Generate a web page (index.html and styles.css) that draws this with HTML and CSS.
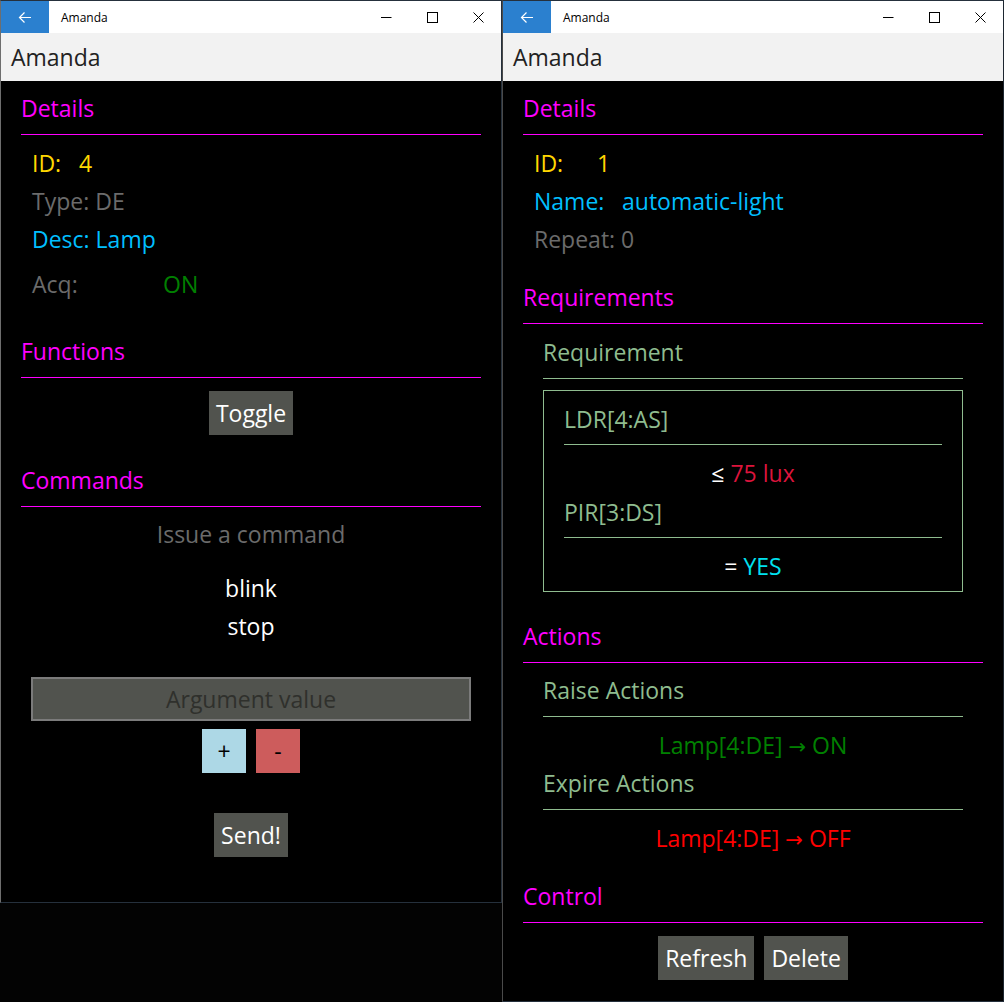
FILE: index.html
```html
<!DOCTYPE html>
<html>
<head>
<meta charset="utf-8">
<title>Amanda</title>
<link rel="stylesheet" href="styles.css">
</head>
<body>
<div class="desk">
  <div class="win win-left">
    <div class="titlebar">
      <div class="back"><svg width="14" height="13" viewBox="0 0 14 13"><path d="M13 6.5H1.5M6.5 1.5L1.5 6.5L6.5 11.5" fill="none" stroke="#fff" stroke-width="1.2"/></svg></div>
      <div class="wtitle">Amanda</div>
      <div class="caps">
        <div class="cap"><svg width="11" height="11" viewBox="0 0 11 11"><path d="M0 5.5H10.5" stroke="#000" stroke-width="1"/></svg></div>
        <div class="cap"><svg width="11" height="11" viewBox="0 0 11 11"><rect x="0.5" y="0.5" width="10" height="10" fill="none" stroke="#000" stroke-width="1"/></svg></div>
        <div class="cap"><svg width="11" height="11" viewBox="0 0 11 11"><path d="M0.5 0.5L10.5 10.5M10.5 0.5L0.5 10.5" stroke="#000" stroke-width="1"/></svg></div>
      </div>
    </div>
    <div class="appbar">Amanda</div>
    <div class="content">
      <h2 class="head h-details">Details</h2>
      <div class="rows">
        <div class="row gold"><span class="lbl w-id">ID:</span><span>4</span></div>
        <div class="row gray">Type: DE</div>
        <div class="row sky">Desc: Lamp</div>
        <div class="row gray acq"><span class="lbl w-acq">Acq:</span><span class="green">ON</span></div>
      </div>
      <h2 class="head h-functions">Functions</h2>
      <div class="center btnrow toggle-row"><button class="btn">Toggle</button></div>
      <h2 class="head h-commands">Commands</h2>
      <div class="center gray line38 issue">Issue a command</div>
      <div class="cmds center">
        <div class="line38">blink</div>
        <div class="line38">stop</div>
      </div>
      <div class="argbox">Argument value</div>
      <div class="center btnrow pm-row">
        <button class="sq plus">+</button>
        <button class="sq minus">-</button>
      </div>
      <div class="center btnrow send-row"><button class="btn">Send!</button></div>
    </div>
  </div>

  <div class="win win-right">
    <div class="titlebar">
      <div class="back"><svg width="14" height="13" viewBox="0 0 14 13"><path d="M13 6.5H1.5M6.5 1.5L1.5 6.5L6.5 11.5" fill="none" stroke="#fff" stroke-width="1.2"/></svg></div>
      <div class="wtitle">Amanda</div>
      <div class="caps">
        <div class="cap"><svg width="11" height="11" viewBox="0 0 11 11"><path d="M0 5.5H10.5" stroke="#000" stroke-width="1"/></svg></div>
        <div class="cap"><svg width="11" height="11" viewBox="0 0 11 11"><rect x="0.5" y="0.5" width="10" height="10" fill="none" stroke="#000" stroke-width="1"/></svg></div>
        <div class="cap"><svg width="11" height="11" viewBox="0 0 11 11"><path d="M0.5 0.5L10.5 10.5M10.5 0.5L0.5 10.5" stroke="#000" stroke-width="1"/></svg></div>
      </div>
    </div>
    <div class="appbar">Amanda</div>
    <div class="content">
      <h2 class="head h-details">Details</h2>
      <div class="rows">
        <div class="row gold"><span class="lbl w-id2">ID:</span><span>1</span></div>
        <div class="row sky"><span class="lbl w-name">Name:</span><span>automatic-light</span></div>
        <div class="row gray">Repeat: 0</div>
      </div>
      <h2 class="head h-req">Requirements</h2>
      <div class="sub">
        <h3 class="subhead sh-req">Requirement</h3>
        <div class="reqbox">
          <div class="cond-head">LDR[4:AS]</div>
          <div class="center line38 cond-val"><span class="white">≤</span> <span class="crimson">75 lux</span></div>
          <div class="cond-head pir">PIR[3:DS]</div>
          <div class="center line38 cond-val"><span class="white">=</span> <span class="cyan">YES</span></div>
        </div>
      </div>
      <h2 class="head h-actions">Actions</h2>
      <div class="sub">
        <h3 class="subhead sh-raise">Raise Actions</h3>
        <div class="center line38 act green">Lamp[4:DE] <span class="arr">→</span> ON</div>
        <h3 class="subhead sh-expire">Expire Actions</h3>
        <div class="center line38 act red">Lamp[4:DE] <span class="arr">→</span> OFF</div>
      </div>
      <h2 class="head h-control">Control</h2>
      <div class="center btnrow ctrl-row">
        <button class="btn">Refresh</button>
        <button class="btn">Delete</button>
      </div>
    </div>
  </div>
</div>
</body>
</html>
```
FILE: styles.css
```css
* { box-sizing: border-box; }
html, body { margin: 0; padding: 0; background: #000; }
body {
  font-family: "Open Sans", "Noto Sans", sans-serif;
  font-size: 23px;
  color: #fff;
}
.desk {
  display: flex;
  align-items: flex-start;
  width: 1004px;
  height: 1002px;
  background: #030303;
}
.win {
  width: 502px;
  background: #000;
  border: 1px solid #25303c;
  display: flex;
  flex-direction: column;
}
.win-left { height: 903px; border-left-color: #6e6e6e; }
.win-right { height: 1002px; border-left-color: #4a4a4a; border-right-color: #1d2630; }

.titlebar {
  height: 32px;
  background: #fff;
  display: flex;
  align-items: center;
}
.back {
  width: 48px;
  height: 32px;
  background: #2b80cf;
  display: flex;
  align-items: center;
  justify-content: center;
}
.wtitle {
  font-size: 12px;
  color: #000;
  margin-left: 12px;
  flex: 1;
}
.caps { display: flex; height: 32px; }
.cap {
  width: 46px;
  height: 32px;
  display: flex;
  align-items: center;
  justify-content: center;
}
.appbar {
  height: 48px;
  line-height: 48px;
  background: #f2f2f2;
  color: #222;
  padding-left: 10px;
}
.content {
  padding: 0 20px;
  flex: 1;
}
.head {
  margin: 0;
  font-size: 23px;
  font-weight: normal;
  line-height: 32px;
  color: #ff00ff;
  padding-bottom: 10px;
  border-bottom: 1px solid #ff00ff;
}
.h-details { margin-top: 11px; }
.rows { padding-left: 11px; margin-top: 9px; }
.row { line-height: 38px; height: 38px; white-space: nowrap; }
.row.acq { margin-top: 7px; }
.lbl { display: inline-block; }
.w-id { width: 47px; }
.w-acq { width: 131px; }
.w-id2 { width: 63px; }
.w-name { width: 88px; }

.gold { color: #ffd700; }
.gray { color: #6b6b6b; }
.sky { color: #00bfff; }
.green { color: #008000; }
.red { color: #ff0000; }
.white { color: #fff; }
.crimson { color: #dc143c; }
.cyan { color: #00e1ef; }
.arr { font-family: "DejaVu Sans", sans-serif; font-size: 21px; line-height: 0; }

.center { text-align: center; }
.line38 { line-height: 38px; height: 38px; }
.btnrow { display: flex; justify-content: center; gap: 10px; }
.btn {
  font-family: inherit;
  font-size: 23px;
  height: 44px;
  padding: 0 7px;
  background: #51534e;
  color: #fff;
  border: none;
  line-height: 44px;
}
.h-functions { margin-top: 32px; }
.toggle-row { margin-top: 13px; }
.h-commands { margin-top: 29px; }
.issue { margin-top: 8px; }
.cmds { margin-top: 16px; color: #fff; }
.argbox {
  margin: 32px 10px 0;
  height: 44px;
  background: #51534e;
  border: 2px solid #7b7b7b;
  color: #2f302c;
  text-align: center;
  line-height: 40px;
}
.pm-row { margin-top: 8px; }
.sq {
  width: 44px;
  height: 44px;
  border: none;
  padding: 0;
  font-family: inherit;
  font-size: 23px;
  color: #000;
}
.plus { background: #add8e6; }
.minus { background: #cd5c5c; }
.send-row { margin-top: 40px; }

.h-req { margin-top: 23px; }
.sub { margin: 0 20px; }
.subhead {
  margin: 0;
  font-size: 23px;
  font-weight: normal;
  line-height: 32px;
  color: #8fbc8f;
  padding-bottom: 10px;
  border-bottom: 1px solid #8fbc8f;
}
.sh-req { margin-top: 12px; }
.reqbox {
  margin-top: 11px;
  border: 1px solid #8fbc8f;
  padding: 12px 20px 6px;
}
.cond-head {
  color: #8fbc8f;
  line-height: 32px;
  padding-bottom: 9px;
  border-bottom: 1px solid #8fbc8f;
}
.cond-val { margin-top: 9px; }
.pir { margin-top: 4px; }
.h-actions { margin-top: 28px; }
.sh-raise { margin-top: 11px; }
.act { margin-top: 9px; }
.sh-expire { margin-top: 3px; }
.h-control { margin-top: 23px; }
.ctrl-row { margin-top: 13px; }
```
